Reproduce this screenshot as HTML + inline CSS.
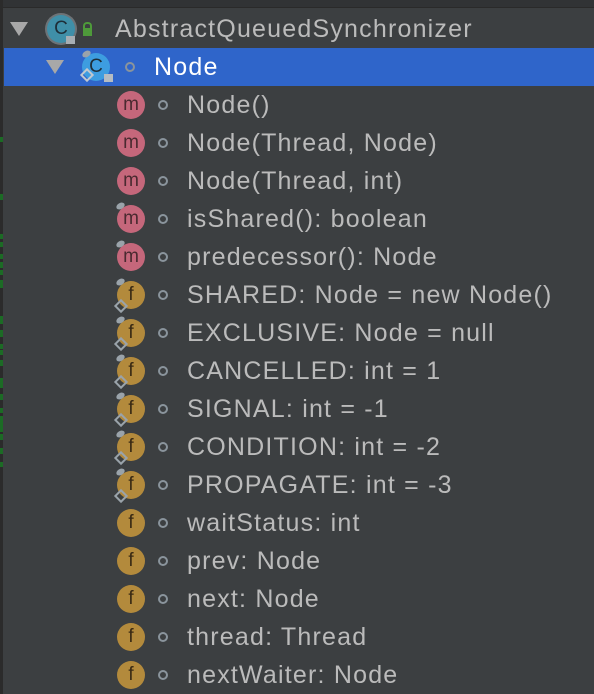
<!DOCTYPE html>
<html><head><meta charset="utf-8"><style>
body{margin:0;width:594px;height:694px;background:#3c3f41;overflow:hidden;position:relative;font-family:"Liberation Sans",sans-serif;}
.top{position:absolute;left:0;top:0;width:594px;height:7px;background:#313335;border-bottom:1px solid #2a2a2a}
.gut{position:absolute;left:0;top:0;width:3px;height:694px;background:#2b2b2b}
.g{position:absolute;left:0;width:3px;background:#1c6b25}
.row{position:absolute;left:0;width:594px;height:38px}
.sel{background:#2f65ca;left:4px;width:590px}
.t{position:absolute;top:5px;font-size:25px;color:#bbbbbb;letter-spacing:1.2px;white-space:nowrap}
.ic{position:absolute;top:5px;width:28px;height:28px;border-radius:50%;font-size:19px;color:#4a2a30;text-align:center;line-height:27px}
.m{background:#c5677b}
.f{background:#b38a3c;color:#3a2a14}
.dot{position:absolute;top:14px;width:6px;height:6px;border:2px solid #8a949c;border-radius:50%}
.arr{position:absolute;top:12px;width:0;height:0;border-left:9px solid transparent;border-right:9px solid transparent;border-top:14px solid #a8a8a8}
.pin{position:absolute;top:3px;width:9px;height:6px;background:#9aa3aa;border-radius:50%;transform:rotate(-30deg)}
.dia{position:absolute;top:25px;width:6px;height:6px;border:2px solid #9aa3aa;transform:rotate(45deg);background:transparent}
.lock{position:absolute;width:9px;height:8px;background:#a7aeb3}
</style></head><body>
<div class="top"></div>
<div class="gut"></div>
<div class="g" style="top:137px;height:5px"></div>
<div class="g" style="top:194px;height:6px"></div>
<div class="g" style="top:234px;height:5px"></div>
<div class="g" style="top:242px;height:5px"></div>
<div class="g" style="top:254px;height:5px"></div>
<div class="g" style="top:262px;height:6px"></div>
<div class="g" style="top:270px;height:5px"></div>
<div class="g" style="top:280px;height:8px"></div>
<div class="g" style="top:316px;height:8px"></div>
<div class="g" style="top:330px;height:7px"></div>
<div class="g" style="top:344px;height:5px"></div>
<div class="g" style="top:350px;height:5px"></div>
<div class="g" style="top:360px;height:6px"></div>
<div class="g" style="top:378px;height:10px"></div>
<div class="g" style="top:394px;height:6px"></div>
<div class="g" style="top:408px;height:5px"></div>
<div class="g" style="top:416px;height:16px"></div>
<div class="g" style="top:434px;height:6px"></div>
<div class="g" style="top:448px;height:6px"></div>
<div class="g" style="top:462px;height:5px"></div>

<div class="row" style="top:10px">
 <div class="arr" style="left:10px"></div>
 <div class="ic" style="left:47px;background:#3f8fa8;color:#1e2e38;box-shadow:0 0 0 2px #6d7377">C</div>
 <div class="lock" style="left:66px;top:26px"></div>
 <div style="position:absolute;left:83px;top:18px;width:9px;height:8px;background:#4e9a3a"></div>
 <div style="position:absolute;left:83px;top:12px;width:5px;height:6px;border:2px solid #4e9a3a;border-bottom:none;border-radius:4px 4px 0 0"></div>
 <div class="t" style="left:115px">AbstractQueuedSynchronizer</div>
</div>
<div class="row sel" style="top:48px">
 <div class="arr" style="left:42px"></div>
 <div class="ic" style="left:78px;background:#3d9de0;color:#1e2e38">C</div>
 <div class="pin" style="left:78px"></div>
 <div class="dia" style="left:78px;top:22px;border-color:#c0c8d0"></div>
 <div class="lock" style="left:100px;top:26px;background:#b5bcc2"></div>
 <div class="dot" style="left:121px"></div>
 <div class="t" style="left:150px;color:#fff;">Node</div>
</div>

<div class="row" style="top:86px"><div class="ic m" style="left:117px">m</div><div class="dot" style="left:158px"></div><div class="t" style="left:187px">Node()</div></div>
<div class="row" style="top:124px"><div class="ic m" style="left:117px">m</div><div class="dot" style="left:158px"></div><div class="t" style="left:187px">Node(Thread, Node)</div></div>
<div class="row" style="top:162px"><div class="ic m" style="left:117px">m</div><div class="dot" style="left:158px"></div><div class="t" style="left:187px">Node(Thread, int)</div></div>
<div class="row" style="top:200px"><div class="ic m" style="left:117px">m</div><div class="pin" style="left:116px"></div><div class="dot" style="left:158px"></div><div class="t" style="left:187px">isShared(): boolean</div></div>
<div class="row" style="top:238px"><div class="ic m" style="left:117px">m</div><div class="pin" style="left:116px"></div><div class="dot" style="left:158px"></div><div class="t" style="left:187px">predecessor(): Node</div></div>
<div class="row" style="top:276px"><div class="ic f" style="left:117px">f</div><div class="pin" style="left:116px"></div><div class="dia" style="left:116px"></div><div class="dot" style="left:158px"></div><div class="t" style="left:187px">SHARED: Node = new Node()</div></div>
<div class="row" style="top:314px"><div class="ic f" style="left:117px">f</div><div class="pin" style="left:116px"></div><div class="dia" style="left:116px"></div><div class="dot" style="left:158px"></div><div class="t" style="left:187px">EXCLUSIVE: Node = null</div></div>
<div class="row" style="top:352px"><div class="ic f" style="left:117px">f</div><div class="pin" style="left:116px"></div><div class="dia" style="left:116px"></div><div class="dot" style="left:158px"></div><div class="t" style="left:187px">CANCELLED: int = 1</div></div>
<div class="row" style="top:390px"><div class="ic f" style="left:117px">f</div><div class="pin" style="left:116px"></div><div class="dia" style="left:116px"></div><div class="dot" style="left:158px"></div><div class="t" style="left:187px">SIGNAL: int = -1</div></div>
<div class="row" style="top:428px"><div class="ic f" style="left:117px">f</div><div class="pin" style="left:116px"></div><div class="dia" style="left:116px"></div><div class="dot" style="left:158px"></div><div class="t" style="left:187px">CONDITION: int = -2</div></div>
<div class="row" style="top:466px"><div class="ic f" style="left:117px">f</div><div class="pin" style="left:116px"></div><div class="dia" style="left:116px"></div><div class="dot" style="left:158px"></div><div class="t" style="left:187px">PROPAGATE: int = -3</div></div>
<div class="row" style="top:504px"><div class="ic f" style="left:117px">f</div><div class="dot" style="left:158px"></div><div class="t" style="left:187px">waitStatus: int</div></div>
<div class="row" style="top:542px"><div class="ic f" style="left:117px">f</div><div class="dot" style="left:158px"></div><div class="t" style="left:187px">prev: Node</div></div>
<div class="row" style="top:580px"><div class="ic f" style="left:117px">f</div><div class="dot" style="left:158px"></div><div class="t" style="left:187px">next: Node</div></div>
<div class="row" style="top:618px"><div class="ic f" style="left:117px">f</div><div class="dot" style="left:158px"></div><div class="t" style="left:187px">thread: Thread</div></div>
<div class="row" style="top:656px"><div class="ic f" style="left:117px">f</div><div class="dot" style="left:158px"></div><div class="t" style="left:187px">nextWaiter: Node</div></div>
</body></html>
